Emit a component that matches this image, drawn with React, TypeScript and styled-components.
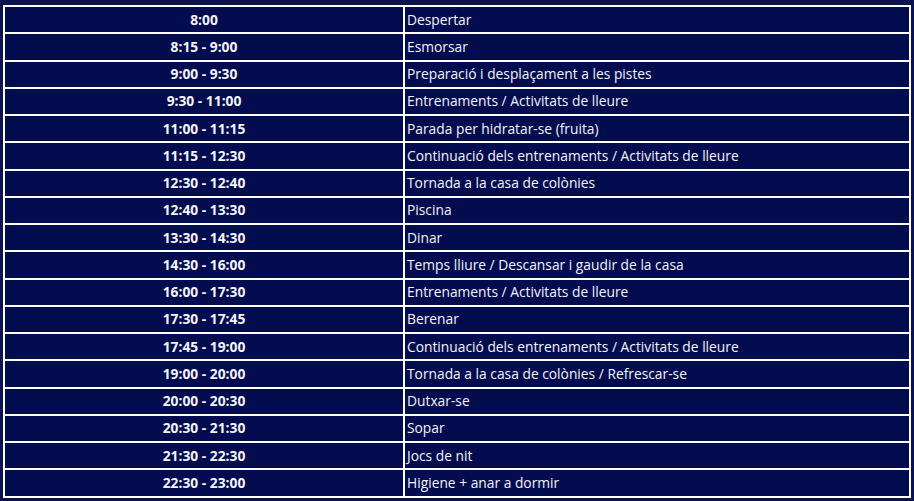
import React from "react";
import styled, { createGlobalStyle } from "styled-components";

const GlobalStyles = createGlobalStyle`
  html, body {
    margin: 0;
    padding: 0;
    background: #0a1250;
  }
  body {
    font-family: "Open Sans", "Noto Sans", sans-serif;
    color: #f4f4f8;
  }
`;

const Page = styled.div`
  padding: 5px 3px;
`;

const Table = styled.table`
  width: 908px;
  border-collapse: collapse;
  border: 2px solid #ffffff;
  table-layout: fixed;
`;

const Row = styled.tr`
  height: 27.25px;
`;

const Cell = styled.td<{ $time?: boolean }>`
  border: 2px solid #ffffff;
  background: #030c4e;
  padding: 0 2px;
  font-size: 13.8px;
  line-height: 18px;
  font-weight: ${(p) => (p.$time ? 700 : 400)};
  text-align: ${(p) => (p.$time ? "center" : "left")};
  width: ${(p) => (p.$time ? "394px" : "auto")};
  white-space: nowrap;
`;

const schedule: [string, string][] = [
  ["8:00", "Despertar"],
  ["8:15 - 9:00", "Esmorsar"],
  ["9:00 - 9:30", "Preparació i desplaçament a les pistes"],
  ["9:30 - 11:00", "Entrenaments / Activitats de lleure"],
  ["11:00 - 11:15", "Parada per hidratar-se (fruita)"],
  ["11:15 - 12:30", "Continuació dels entrenaments / Activitats de lleure"],
  ["12:30 - 12:40", "Tornada a la casa de colònies"],
  ["12:40 - 13:30", "Piscina"],
  ["13:30 - 14:30", "Dinar"],
  ["14:30 - 16:00", "Temps lliure / Descansar i gaudir de la casa"],
  ["16:00 - 17:30", "Entrenaments / Activitats de lleure"],
  ["17:30 - 17:45", "Berenar"],
  ["17:45 - 19:00", "Continuació dels entrenaments / Activitats de lleure"],
  ["19:00 - 20:00", "Tornada a la casa de colònies / Refrescar-se"],
  ["20:00 - 20:30", "Dutxar-se"],
  ["20:30 - 21:30", "Sopar"],
  ["21:30 - 22:30", "Jocs de nit"],
  ["22:30 - 23:00", "Higiene + anar a dormir"],
];

function App(): JSX.Element {
  return (
    <React.Fragment>
      <GlobalStyles />
      <Page>
        <Table>
          <tbody>
            {schedule.map(([time, activity]) => (
              <Row key={time}>
                <Cell $time>{time}</Cell>
                <Cell>{activity}</Cell>
              </Row>
            ))}
          </tbody>
        </Table>
      </Page>
    </React.Fragment>
  );
}

export default App;
